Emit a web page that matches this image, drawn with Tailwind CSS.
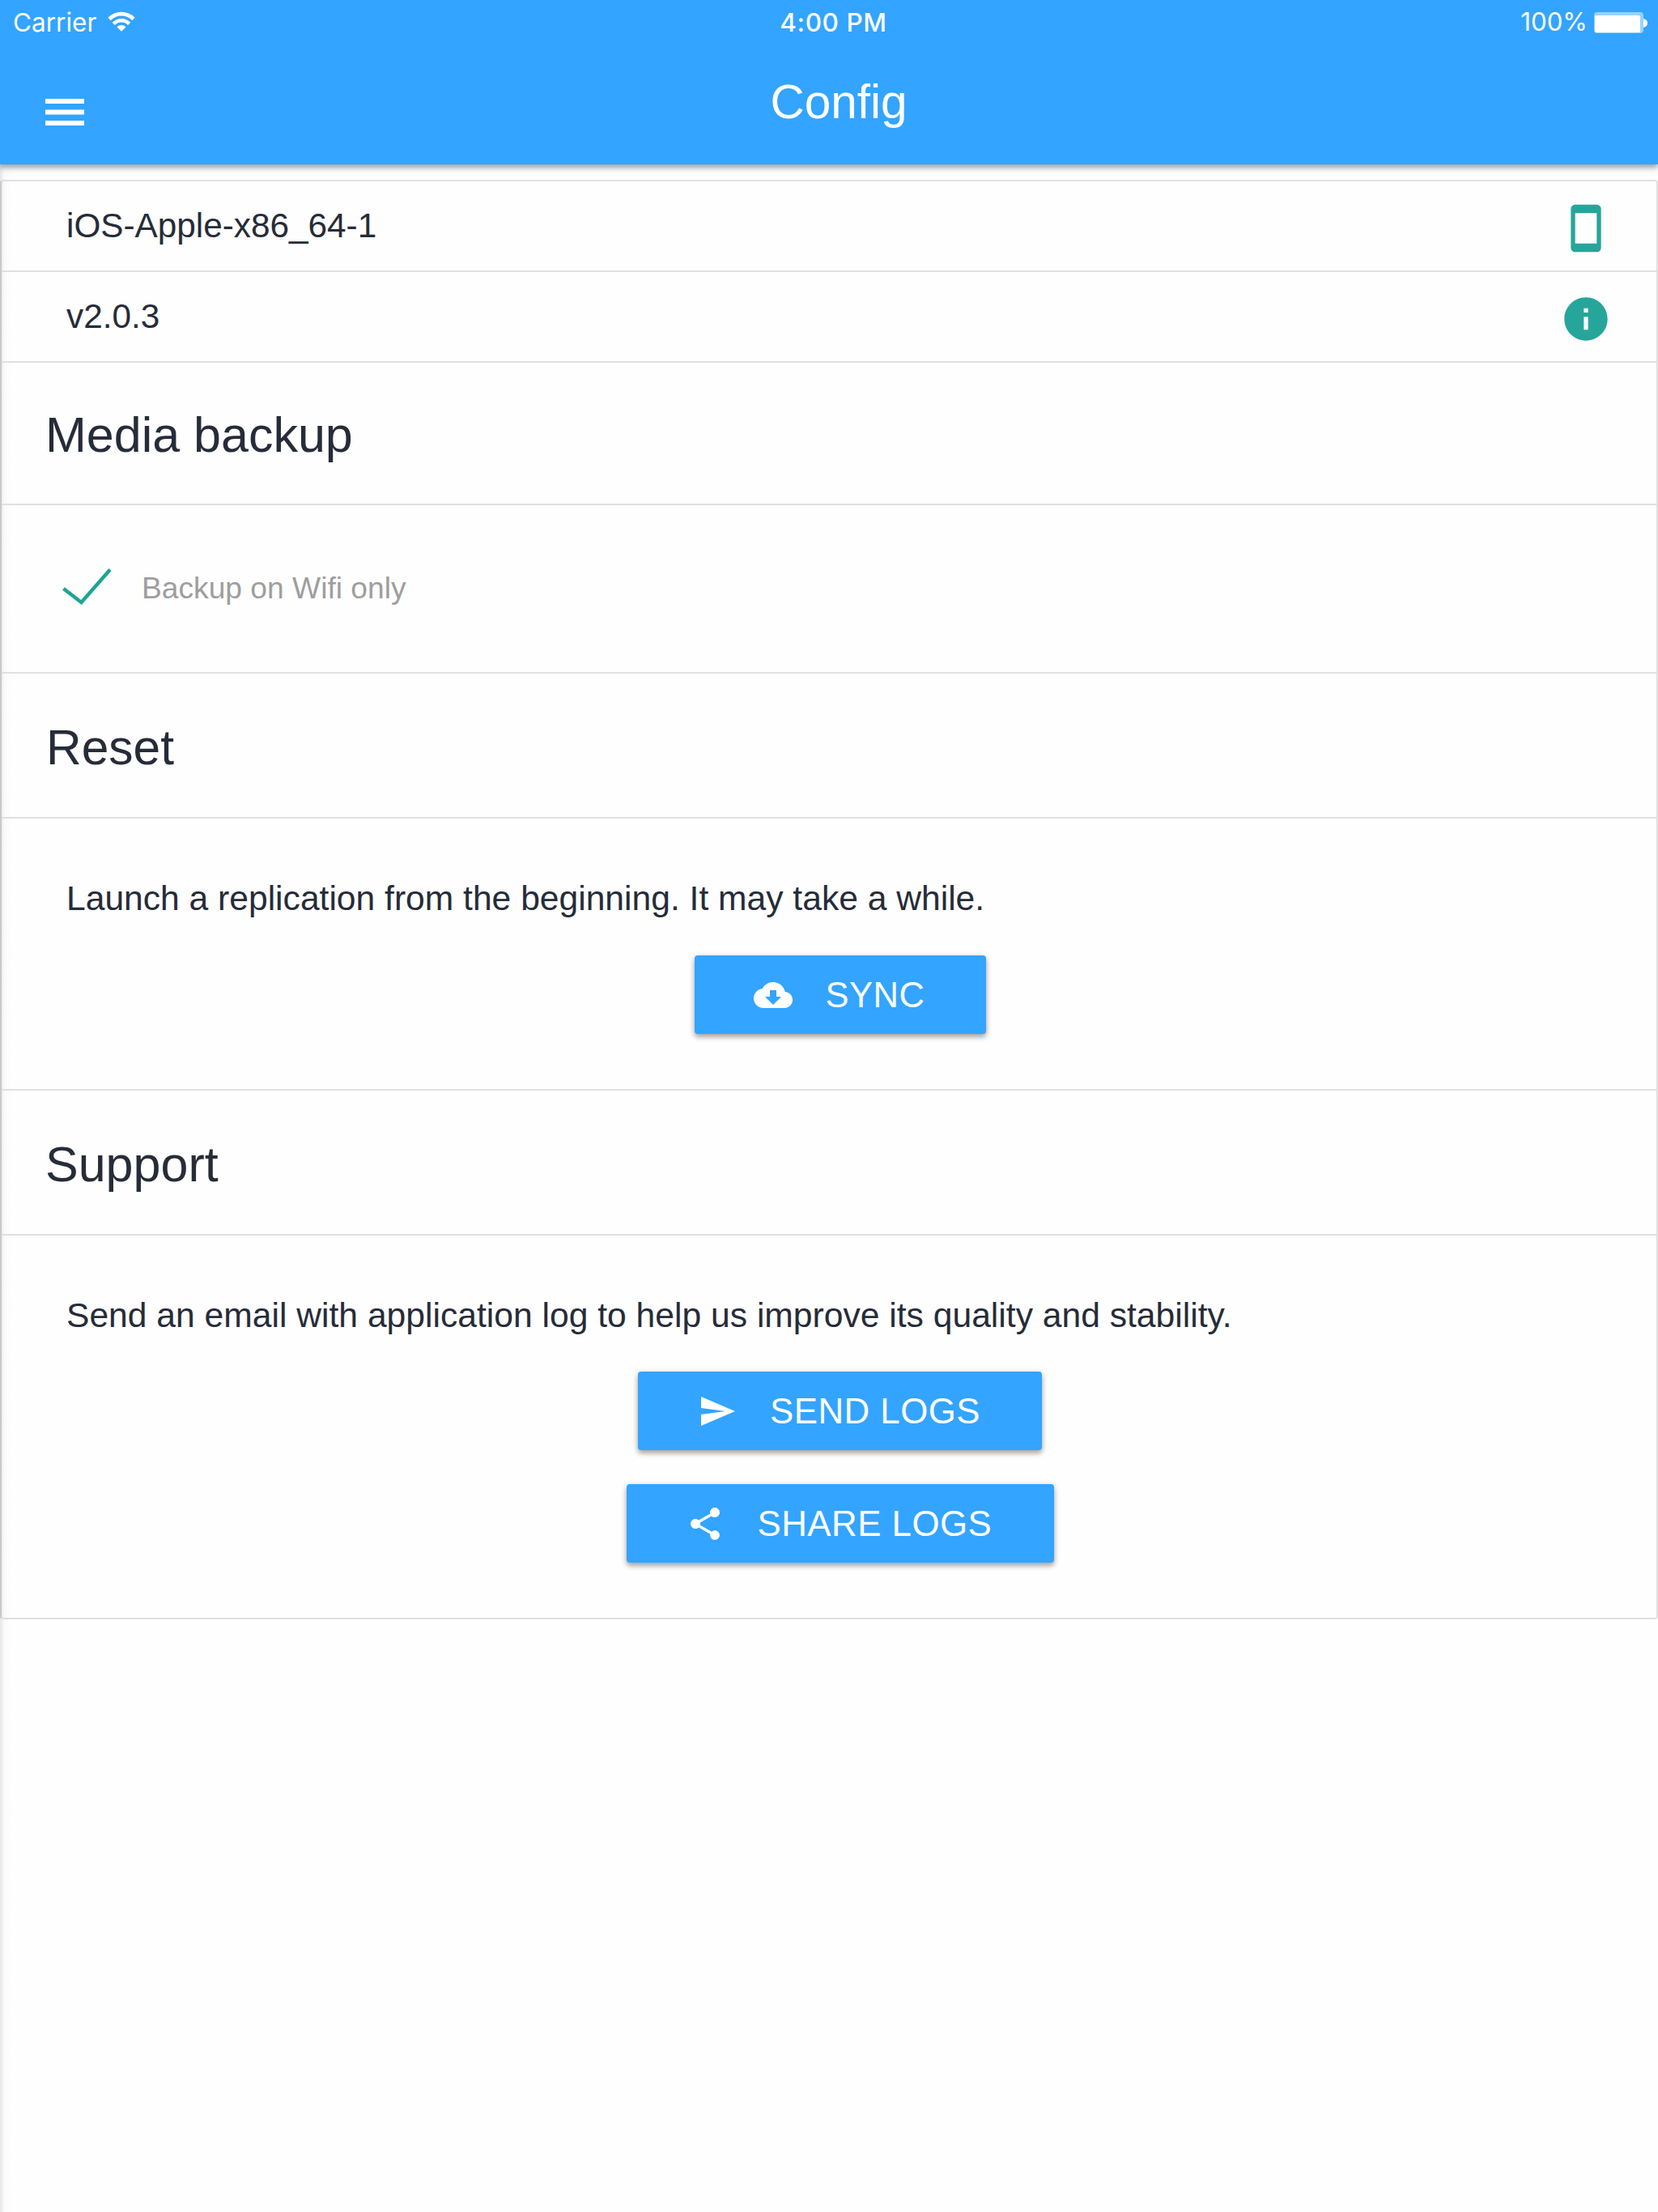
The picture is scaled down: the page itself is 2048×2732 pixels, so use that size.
<!DOCTYPE html>
<html lang="en">
<head>
<meta charset="utf-8">
<title>Config</title>
<script src="https://cdn.jsdelivr.net/npm/@tailwindcss/browser@4"></script>
</head>
<body class="bg-[#fefefe]">
<div class="flex h-[2732px] w-[2048px] flex-col overflow-hidden bg-[#fefefe] bg-[linear-gradient(to_right,#e6e6e6_0px,#f0f0f0_3px,#fafafa_5px,#fefefe_14px)] font-['Liberation_Sans',sans-serif] text-[#262c38]">

  <header class="z-10 flex h-[203px] shrink-0 flex-col bg-[#33a4ff] text-white shadow-[0_4px_6px_rgba(0,0,0,0.32),0_2px_14px_rgba(0,0,0,0.10)]">
    <!-- status bar -->
    <div class="grid h-[55px] grid-cols-3 items-center pl-[16px] pr-[12px] font-['Inter',sans-serif] leading-[55px]">
      <div class="flex items-center gap-[14px] text-[31.5px]">
        <span>Carrier</span>
        <svg class="mb-[3px] h-[25px] w-[34px]" viewBox="0 0 34 25" fill="none" stroke="#fff" stroke-width="4.6">
          <path d="M2 9.5C10.5 1 23.5 1 32 9.5"/>
          <path d="M7.3 15.3C12.7 9.9 21.3 9.9 26.7 15.3"/>
          <path d="M11.5 19.5C14.5 16.3 19.5 16.3 22.5 19.5L17 24.7z" fill="#fff" stroke="none"/>
        </svg>
      </div>
      <span class="pl-[7px] text-center text-[31.5px] font-medium tracking-[0.6px]">4:00 PM</span>
      <div class="flex items-center justify-end gap-[8px] text-[31.2px]">
        <span>100%</span>
        <svg class="h-[26px] w-[67px]" viewBox="0 0 67 26">
          <rect x="0" y="0" width="61" height="26" rx="4" fill="#fff" fill-opacity=".5"/>
          <rect x="1" y="4" width="56" height="21" rx="2" fill="#fff"/>
          <path d="M61 8c3.500.8 5 2.700 5 5.500s-1.500 4.700-5 5.500z" fill="#fff"/>
        </svg>
      </div>
    </div>
    <!-- navigation bar -->
    <div class="flex flex-1 items-start pl-[56px] pr-[80px]">
      <svg class="mt-[67px] h-[33px] w-[48px] shrink-0" viewBox="0 0 48 33" fill="#fff">
        <path d="M0 0h48v6H0zM0 13.500h48v6H0zM0 27h48v6H0z"/>
      </svg>
      <h1 class="mt-[41px] flex-1 text-center text-[58.5px] leading-[60px]">Config</h1>
    </div>
  </header>

  <main class="mt-[19px] flex shrink-0 flex-col divide-y-2 divide-[#e0e0e0] rounded-[4px] border-2 border-[#e0e0e0] border-l-[#c9c9c9] text-[42.6px] leading-[64px]">
    <div class="box-content flex h-[110px] items-center justify-between pl-[80px] pr-[55px] text-[42.3px]">
      <span>iOS-Apple-x86_64-1</span>
      <svg class="mt-[6px] size-[64px]" viewBox="0 0 24 24" fill="#26a69a"><path d="M17 1.010L7 1c-1.100 0-1.990.9-1.990 2v18c0 1.100.890 2 1.990 2h10c1.100 0 2-.9 2-2V3c0-1.100-.9-1.990-2-1.990zM17 19H7V5h10v14z"/></svg>
    </div>
    <div class="box-content flex h-[110px] items-center justify-between pl-[80px] pr-[55px] text-[42.3px]">
      <span>v2.0.3</span>
      <svg class="mt-[6px] size-[64px]" viewBox="0 0 24 24" fill="#26a69a"><path d="M12 2C6.480 2 2 6.480 2 12s4.480 10 10 10 10-4.480 10-10S17.520 2 12 2zm1 15h-2v-6h2v6zm0-8h-2V7h2v2z"/></svg>
    </div>

    <div class="flex h-[176px] items-center pl-[54px] pt-[3px]">
      <h2 class="text-[61px]">Media backup</h2>
    </div>
    <div class="flex h-[208px] items-center gap-[35px] pb-[2px] pl-[74px]">
      <svg class="h-[50px] w-[64px]" viewBox="76 701 64 50" fill="none" stroke="#1ba595" stroke-width="4.400"><path d="M78.500 727L100.500 744L136 703.500"/></svg>
      <span class="text-[37.2px] text-[#9e9e9e]">Backup on Wifi only</span>
    </div>

    <div class="flex h-[179px] items-center pl-[55px] pt-[5px]">
      <h2 class="text-[60.5px]">Reset</h2>
    </div>
    <div class="flex h-[336px] flex-col items-center pl-[80px] pr-[53px] pt-[66px]">
      <p class="self-start whitespace-nowrap">Launch a replication from the beginning. It may take a while.</p>
      <button class="mt-[39px] flex h-[97px] w-[360px] items-center gap-[41px] rounded-[4px] bg-[#33a4ff] pl-[73px] text-[43.5px] tracking-[0.5px] text-white shadow-[0_4px_6px_rgba(0,0,0,0.30),0_1px_8px_rgba(0,0,0,0.12)]">
        <svg class="size-[48px]" viewBox="0 0 24 24" fill="#fff"><path d="M19.350 10.040C18.670 6.590 15.640 4 12 4 9.110 4 6.600 5.640 5.350 8.040 2.340 8.360 0 10.910 0 14c0 3.310 2.690 6 6 6h13c2.760 0 5-2.240 5-5 0-2.640-2.050-4.780-4.650-4.960zM17 13l-5 5-5-5h3V9h4v4h3z"/></svg>
        <span class="pt-px">SYNC</span>
      </button>
    </div>

    <div class="flex h-[179px] items-center pl-[54px] pt-[5px]">
      <h2 class="text-[61px]">Support</h2>
    </div>
    <div class="flex h-[472px] flex-col items-center pl-[80px] pr-[53px] pt-[66px]">
      <p class="self-start whitespace-nowrap tracking-[0.01px]">Send an email with application log to help us improve its quality and stability.</p>
      <button class="mt-[38px] flex h-[97px] w-[499px] items-center gap-[41px] rounded-[4px] bg-[#33a4ff] pl-[74px] text-[43.8px] tracking-[0.5px] text-white shadow-[0_4px_6px_rgba(0,0,0,0.30),0_1px_8px_rgba(0,0,0,0.12)]">
        <svg class="size-[48px]" viewBox="0 0 24 24" fill="#fff"><path d="M2.010 21L23 12 2.010 3 2 10l15 2-15 2z"/></svg>
        <span class="pt-px">SEND LOGS</span>
      </button>
      <button class="mt-[42px] flex h-[97px] w-[528px] items-center gap-[41px] rounded-[4px] bg-[#33a4ff] pl-[73px] text-[43.8px] tracking-[0.5px] text-white shadow-[0_4px_6px_rgba(0,0,0,0.30),0_1px_8px_rgba(0,0,0,0.12)]">
        <svg class="size-[48px]" viewBox="0 0 24 24" fill="#fff"><path d="M18 16.080c-.760 0-1.440.3-1.960.770L8.910 12.700c.050-.230.090-.460.090-.7s-.040-.470-.090-.7l7.050-4.110c.540.5 1.250.810 2.040.810 1.660 0 3-1.340 3-3s-1.340-3-3-3-3 1.340-3 3c0 .240.040.470.090.7L8.040 9.810C7.500 9.310 6.790 9 6 9c-1.660 0-3 1.340-3 3s1.340 3 3 3c.790 0 1.500-.310 2.040-.810l7.120 4.160c-.050.210-.080.430-.080.650 0 1.610 1.310 2.920 2.920 2.920s2.920-1.310 2.920-2.920-1.310-2.920-2.920-2.920z"/></svg>
        <span class="pt-px">SHARE LOGS</span>
      </button>
    </div>
  </main>
</div>
</body>
</html>
